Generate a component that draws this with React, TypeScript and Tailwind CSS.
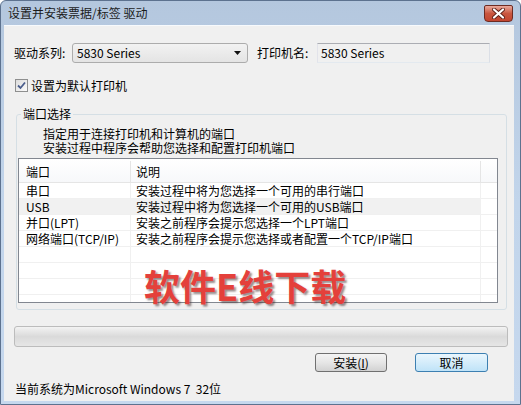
import React from "react";

type Row = { port?: string; desc?: string; shaded?: boolean };

const rows: Row[] = [
	{ port: "串口", desc: "安装过程中将为您选择一个可用的串行端口" },
	{ port: "USB", desc: "安装过程中将为您选择一个可用的USB端口", shaded: true },
	{ port: "并口(LPT)", desc: "安装之前程序会提示您选择一个LPT端口" },
	{ port: "网络端口(TCP/IP)", desc: "安装之前程序会提示您选择或者配置一个TCP/IP端口" },
	{},
	{},
	{},
	{},
];

const CloseButton = () => (
	<div className="mt-[4px] mr-[7px] ml-auto flex h-[17px] w-[29px] items-center justify-center rounded-b-[4px] rounded-t-[2px] border border-[#6d2b22] bg-gradient-to-b from-[#e9a99c] via-[#c9563f] to-[#c2452f]">
		<svg width="13" height="11" viewBox="0 0 13 11">
			<path d="M2 1.5 L11 9.5 M11 1.5 L2 9.5" stroke="#5e2219" strokeWidth="4" strokeLinecap="round" />
			<path d="M2 1.5 L11 9.5 M11 1.5 L2 9.5" stroke="#ffffff" strokeWidth="2.2" strokeLinecap="round" />
		</svg>
	</div>
);

const CheckBox = () => (
	<div className="flex h-[13px] w-[13px] items-center justify-center border border-[#8e8f8f] bg-gradient-to-br from-[#dcdcdc] to-[#fbfbfb]">
		<svg width="11" height="11" viewBox="0 0 11 11">
			<path d="M2 5.5 L4.5 8 L9 2.5" fill="none" stroke="#4a5d8c" strokeWidth="1.8" />
		</svg>
	</div>
);

const Button = ({ children, primary }: { children: React.ReactNode; primary?: boolean }) => (
	<div
		className={
			primary
				? "flex h-[19px] w-[73px] items-center justify-center rounded-[3px] border border-[#3c7fb1] bg-gradient-to-b from-[#eaf6fd] to-[#bfe3f8] leading-[12px]"
				: "flex h-[19px] w-[72px] items-center justify-center rounded-[3px] border border-[#707070] bg-gradient-to-b from-[#f4f4f4] via-[#e6e6e6] to-[#d2d2d2] leading-[12px]"
		}
	>
		{children}
	</div>
);

export default function App() {
	return (
		<div className="relative flex h-[405px] w-[521px] flex-col overflow-hidden rounded-t-[6px] border border-[#5d728f] bg-gradient-to-b from-[#b4c7de] via-[#c2d5eb] to-[#c6d8ee] font-['Noto_Sans_CJK_SC','Liberation_Sans',sans-serif] text-[12px] text-black">
			{/* title bar */}
			<div className="flex h-[24px] shrink-0 items-start">
				<span className="self-center pl-[7px] leading-[12px] text-[#1b1b1b]">设置并安装票据/标签 驱动</span>
				<CloseButton />
			</div>

			{/* client */}
			<div className="mb-[3px] ml-[3px] mr-[6px] flex flex-1 flex-col border-t border-[#f7fafd] bg-[#f0f0f0]">
				<div className="mt-[17px] ml-[10px] flex h-[20px] items-center leading-[12px]">
					<span className="w-[58px]">驱动系列:</span>
					<div className="flex h-[20px] w-[176px] items-center justify-between rounded-[3px] border border-[#acacac] bg-gradient-to-b from-[#f2f2f2] to-[#e4e4e4] pl-[4px] pr-[6px]">
						<span>5830 Series</span>
						<svg width="7" height="4" viewBox="0 0 7 4">
							<path d="M0 0 H7 L3.5 4 Z" fill="#111" />
						</svg>
					</div>
					<span className="ml-[9px] w-[60px]">打印机名:</span>
					<div className="flex h-[20px] w-[173px] items-center border border-[#abadb3] border-b-[#e3e9ef] border-l-[#e2e3ea] border-r-[#dbdfe6] pl-[3px]">
						5830 Series
					</div>
				</div>

				<div className="mt-[16px] ml-[11px] flex h-[13px] items-center gap-[3px] leading-[12px]">
					<CheckBox />
					<span>设置为默认打印机</span>
				</div>

				<fieldset className="mt-[16px] ml-[12px] w-[491px] rounded-[3px] border border-[#d5dfe5] pb-[6px]">
					<legend className="ml-[4px] px-[2px] leading-[12px]">端口选择</legend>
					<div className="mt-[7px] pl-[26px] leading-[14px]">
						<div>指定用于连接打印机和计算机的端口</div>
						<div>安装过程中程序会帮助您选择和配置打印机端口</div>
					</div>

					<div className="mt-[3px] ml-[1px] h-[145px] w-[480px] overflow-hidden border border-[#828790] bg-white">
						<div className="flex h-[24px] border-b border-[#e5e5e5] bg-gradient-to-b from-white to-[#f7f8fa] pt-[2px]">
							<div className="flex w-[112px] items-center border-r border-[#e5e5e5] pl-[7px]">端口</div>
							<div className="flex w-[350px] items-center border-r border-[#e5e5e5] pl-[5px]">说明</div>
							<div className="flex-1" />
						</div>
						{rows.map((r, i) => (
							<div key={i} className="flex h-[16px] border-b border-[#f0f0f0] leading-[15px]">
								<div className={`w-[112px] border-r border-[#f0f0f0] pl-[7px] ${r.shaded ? "bg-[#f1f1f1]" : ""}`}>
									{r.port}
								</div>
								<div className={`w-[350px] border-r border-[#f0f0f0] pl-[5px] ${r.shaded ? "bg-[#f1f1f1]" : ""}`}>
									{r.desc}
								</div>
								<div className="flex-1" />
							</div>
						))}
					</div>
				</fieldset>

				<div className="mt-[16px] ml-[10px] h-[21px] w-[494px] rounded-[3px] border border-[#bcbcbc] bg-gradient-to-b from-[#f3f3f3] via-[#dadada] to-[#e6e6e6]" />

				<div className="mt-[6px] ml-[311px] flex gap-[28px]">
					<Button>
						安装(<u>I</u>)
					</Button>
					<Button primary>取消</Button>
				</div>

				<div className="mt-[11px] ml-[11px] whitespace-pre leading-[12px]">当前系统为Microsoft Windows 7  32位</div>
			</div>

			{/* watermark */}
			<div className="absolute left-[143px] top-[266px] text-[36px] font-bold leading-[36px] text-[#e4403b] [text-shadow:2px_2px_2px_rgba(70,50,50,0.55)]">
				软件E线下载
			</div>
		</div>
	);
}
